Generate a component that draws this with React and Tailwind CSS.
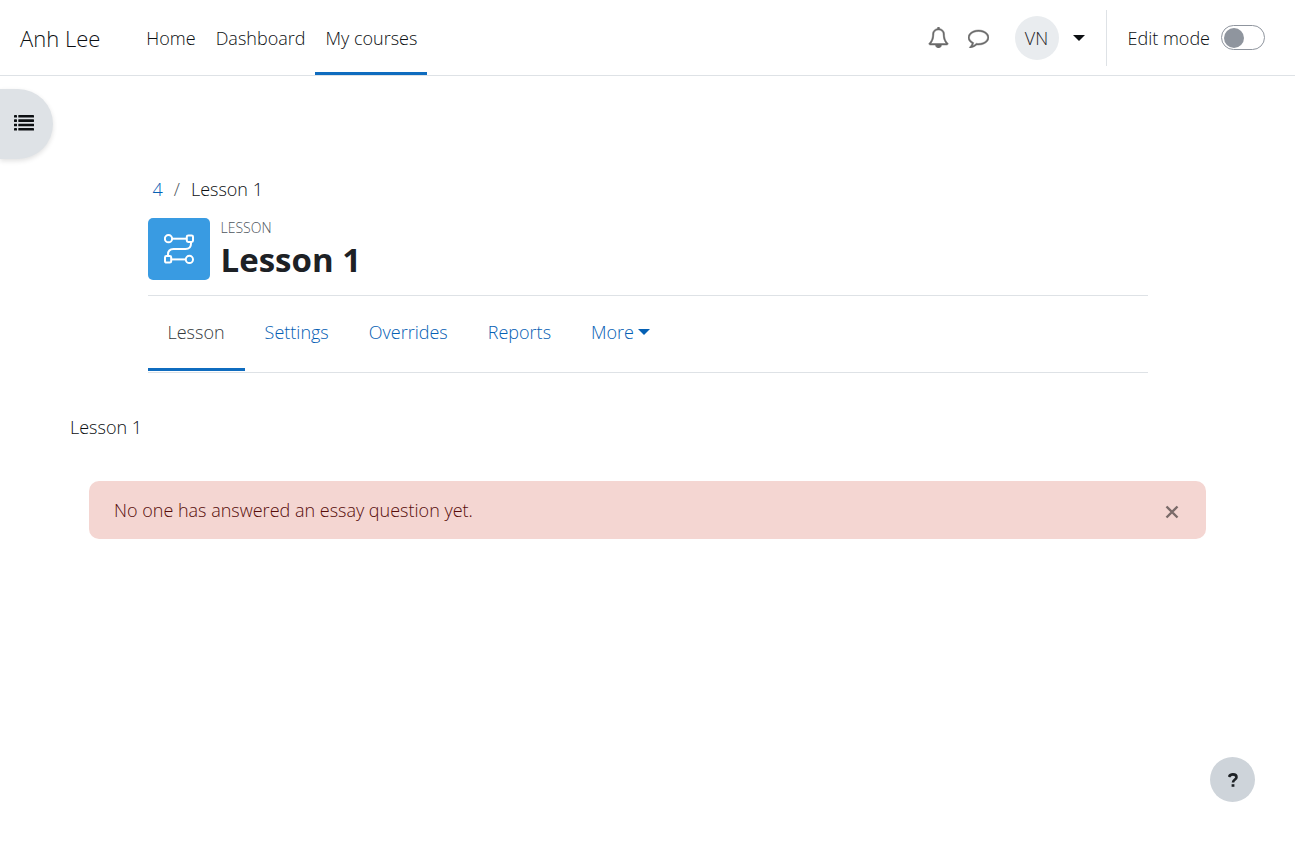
import React, { useState } from 'react';

const NAV = [
  { label: 'Home', active: false },
  { label: 'Dashboard', active: false },
  { label: 'My courses', active: true },
];

const TABS = [
  { label: 'Lesson', active: true },
  { label: 'Settings', active: false },
  { label: 'Overrides', active: false },
  { label: 'Reports', active: false },
];

function BellIcon() {
  return (
    <svg viewBox="0 0 1792 1792" className="size-[21px]" fill="currentColor" stroke="currentColor" strokeWidth="40" aria-hidden="true">
      <path d="M912 1696q0-16-16-16-59 0-101.5-42.5t-42.5-101.5q0-16-16-16t-16 16q0 73 51.5 124.5t124.5 51.5q16 0 16-16zm-666-288h1300q-266-300-266-832 0-51-24-105t-69-103-121.5-80.5-169.5-31.5-169.5 31.5-121.5 80.5-69 103-24 105q0 532-266 832zm1482 0q0 52-38 90t-90 38h-448q0 106-75 181t-181 75-181-75-75-181h-448q-52 0-90-38t-38-90q50-42 91-88t85-119.5 74.5-158.5 50-206 19.5-260q0-152 117-282.5t307-158.5q-8-19-8-39 0-40 28-68t68-28 68 28 28 68q0 20-8 39 190 28 307 158.5t117 282.5q0 139 19.5 260t50 206 74.5 158.5 85 119.5 91 88z" />
      <path d="M700 1530h392q-40 160-196 160t-196-160z" />
    </svg>
  );
}

function CommentIcon() {
  return (
    <svg viewBox="0 0 1792 1792" className="size-[21px]" fill="currentColor" stroke="currentColor" strokeWidth="40" aria-hidden="true">
      <path d="M896 384q-204 0-381.5 69.5t-282 187.5-104.5 255q0 112 71.5 213.5t201.5 175.5l87 50-27 96q-24 91-70 172 152-63 275-171l43-38 57 6q69 8 130 8 204 0 381.5-69.5t282-187.5 104.5-255-104.5-255-282-187.5-381.5-69.5zm896 512q0 174-120 321.5t-326 233-450 85.5q-70 0-145-8-198 175-460 242-49 14-114 22h-5q-15 0-27-10.5t-16-27.5v-1q-3-4-.5-12t2-10 4.5-9.5l6-9 7-8.5 8-9q7-8 31-34.5t34.5-38 31-39.5 32.5-51 27-59 26-76q-157-89-247.5-220t-90.5-281q0-174 120-321.5t326-233 450-85.5 450 85.5 326 233 120 321.5z" />
    </svg>
  );
}

function ListIcon() {
  return (
    <svg viewBox="0 0 20 16" className="h-4 w-5" fill="currentColor" aria-hidden="true">
      {[0, 4.3, 8.7, 13].map((y) => (
        <g key={y}>
          <rect x="0" y={y} width="3" height="2.6" rx="0.4" />
          <rect x="4.3" y={y} width="15.7" height="2.6" rx="0.4" />
        </g>
      ))}
    </svg>
  );
}

function LessonIcon() {
  return (
    <svg viewBox="0 0 30 30" className="size-[30px]" fill="none" stroke="currentColor" strokeWidth="2" aria-hidden="true">
      <circle cx="4.5" cy="4.7" r="3.6" />
      <path d="M8.1 4.7h14.6" />
      <rect x="22.8" y="1.4" width="6.2" height="6.6" rx="1.4" />
      <path d="M27 8v1.5c0 3.800-2 5.500-5.500 5.500H9.500C6 15 4 16.700 4 20.500V22" />
      <rect x="1" y="22" width="6.2" height="6.6" rx="1.4" />
      <path d="M7.4 25.4h14.4" />
      <circle cx="25.4" cy="25.4" r="3.6" />
    </svg>
  );
}

function Caret({ className }) {
  return (
    <svg viewBox="0 0 12 6" className={className} fill="currentColor" aria-hidden="true">
      <path d="M0 0h12L6 6z" />
    </svg>
  );
}

function Header() {
  const [editing, setEditing] = useState(false);
  return (
    <header className="flex h-[76px] items-stretch border-b border-[#dee2e6] bg-white pr-[30px] pl-5">
      <a href="#site" className="flex items-center pr-9 text-[22px]">Anh Lee</a>
      <nav className="flex" aria-label="Site">
        {NAV.map((item) => (
          <a
            key={item.label}
            href="#nav"
            className={
              item.active
                ? 'flex items-center border-y-[3px] border-t-transparent border-b-[#0f6cbf] px-2.5'
                : 'flex items-center border-y-[3px] border-transparent px-2.5'
            }
          >
            {item.label}
          </a>
        ))}
      </nav>
      <div className="ml-auto flex items-center">
        <button type="button" aria-label="Notifications" className="flex w-10 justify-center text-[#6a6a6a]">
          <BellIcon />
        </button>
        <button type="button" aria-label="Messages" className="flex w-10 justify-center text-[#6a6a6a]">
          <CommentIcon />
        </button>
        <button type="button" aria-label="User menu" className="ml-4 flex items-center gap-3.5">
          <span className="flex size-11 items-center justify-center rounded-full bg-[#e9ecef] text-[#1d2125]">VN</span>
          <Caret className="h-1.5 w-3" />
        </button>
        <div className="ml-[21px] h-14 border-l border-[#dee2e6]" />
        <label htmlFor="edit-mode" className="pr-[11px] pl-[21px]">Edit mode</label>
        <input
          id="edit-mode"
          type="checkbox"
          role="switch"
          checked={editing}
          onChange={() => setEditing(!editing)}
          className="flex h-[25px] w-11 appearance-none items-center rounded-full border border-[#8f959e] px-0.5 before:size-5 before:rounded-full before:bg-[#8f959e] before:content-[''] checked:justify-end"
        />
      </div>
    </header>
  );
}

export default function App() {
  const [open, setOpen] = useState(true);
  return (
    <div className="min-h-screen bg-white font-['Open_Sans','Noto_Sans',sans-serif] text-[18px] leading-7 font-light text-[#0c0f12]">
      <Header />
      <button
        type="button"
        aria-label="Open course index"
        className="fixed top-[89px] left-0 flex h-[70px] w-[53px] items-center rounded-r-full bg-[#dee2e6] pb-0.5 pl-3.5 shadow-[0_2px_5px_rgba(0,0,0,0.12)]"
      >
        <ListIcon />
      </button>

      <main className="px-[70px] pt-[99px]">
        <div className="mx-auto max-w-[1000px]">
          <ol className="flex gap-[11px] px-[5px]" aria-label="Breadcrumb">
            <li><a href="#course" className="text-[#0560b4]">4</a></li>
            <li aria-hidden="true" className="text-[#4d555c]">/</li>
            <li>Lesson 1</li>
          </ol>
          <div className="flex items-center gap-[11px] border-b border-[#dee2e6] py-[15px]">
            <div className="flex size-[62px] items-center justify-center rounded-[5px] bg-[#399be2] text-white">
              <LessonIcon />
            </div>
            <div>
              <div className="text-[14px] leading-5 text-[#4d555c] uppercase">Lesson</div>
              <h1 className="pt-0.5 text-[33px] leading-10 font-bold text-[#1d2125]">Lesson 1</h1>
            </div>
          </div>
          <nav className="flex h-[77px] border-b border-[#dee2e6] pb-px text-[#0560b4]" aria-label="Lesson sections">
            {TABS.map((tab) => (
              <a
                key={tab.label}
                href="#tab"
                className={
                  tab.active
                    ? 'flex items-center border-b-[3px] border-[#0f6cbf] px-5 text-[#33383d]'
                    : 'flex items-center border-b-[3px] border-transparent px-5'
                }
              >
                {tab.label}
              </a>
            ))}
            <button type="button" className="flex items-center gap-1 border-b-[3px] border-transparent px-5">
              More
              <Caret className="h-1.5 w-3" />
            </button>
          </nav>
        </div>

        <p className="pt-10">Lesson 1</p>

        {open && (
          <div role="alert" className="mx-[19px] mt-10 flex h-[58px] items-center justify-between rounded-[10px] bg-[#f4d6d2] pr-[27px] pl-[25px] text-[#560c0a]">
            <span>No one has answered an essay question yet.</span>
            <button type="button" aria-label="Dismiss" onClick={() => setOpen(false)} className="pt-1 text-[#7a6b69]">
              <svg viewBox="0 0 14 14" className="size-3.5" fill="none" stroke="currentColor" strokeWidth="2.4" aria-hidden="true">
                <path d="M1.5 1.5l11 11M12.5 1.5l-11 11" />
              </svg>
            </button>
          </div>
        )}
      </main>

      <button
        type="button"
        aria-label="Help"
        className="fixed right-10 bottom-10 flex size-[45px] items-center justify-center rounded-full bg-[#ced4da] text-[#1d2125]"
      >
        <svg viewBox="0 0 10 14" className="h-3.5 w-2.5" fill="none" stroke="currentColor" strokeWidth="2.6" aria-hidden="true">
          <path d="M1 3.9C1.7 2.2 3 1.4 4.9 1.4 7 1.4 8.5 2.5 8.5 4.2c0 2.4-3.5 2.2-3.5 5.3" />
          <path d="M3.6 12.5h2.8" />
        </svg>
      </button>
    </div>
  );
}
